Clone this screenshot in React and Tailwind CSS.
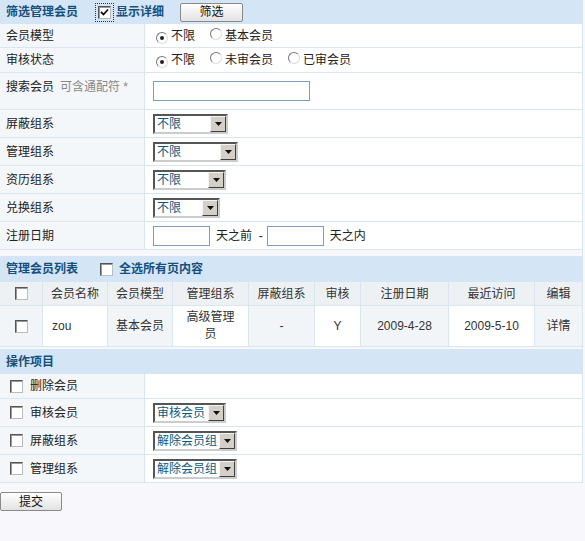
import React from "react";

const FONT = "font-['Liberation_Sans','Noto_Sans_CJK_SC',sans-serif]";

function Check({ checked = false, focus = false }) {
  const box = (
    <span className="relative inline-flex h-[13px] w-[13px] shrink-0 items-center justify-center border border-t-[#555] border-l-[#555] border-b-[#bbb] border-r-[#bbb] bg-white shadow-[inset_1px_1px_0_#999]">
      {checked && (
        <svg width="9" height="9" viewBox="0 0 9 9">
          <path d="M1 4 L3.5 6.5 L8 1.5" fill="none" stroke="#111" strokeWidth="1.8" />
        </svg>
      )}
    </span>
  );
  if (focus) {
    return (
      <span className="inline-flex items-center justify-center border border-dotted border-[#333] p-[2px]">{box}</span>
    );
  }
  return box;
}

function Radio({ checked = false }) {
  return (
    <span className="inline-flex h-[12px] w-[12px] shrink-0 items-center justify-center rounded-full border border-t-[#777] border-l-[#777] border-b-[#ddd] border-r-[#ddd] bg-white">
      {checked && <span className="h-[4px] w-[4px] rounded-full bg-[#222]" />}
    </span>
  );
}

function Sel({ w, text }) {
  return (
    <div className={`flex h-[20px] items-center border-2 border-t-[#555] border-l-[#555] border-b-[#ccc] border-r-[#ccc] bg-white ${w}`}>
      <span className="flex-1 overflow-hidden whitespace-nowrap pl-[2px] text-[12px] leading-[16px] text-[#0d5a7e]">{text}</span>
      <span className="flex h-[16px] w-[16px] items-center justify-center border border-t-[#f4f4f4] border-l-[#f4f4f4] border-b-[#404040] border-r-[#404040] bg-[#d4d0c8]">
        <svg width="7" height="4" viewBox="0 0 7 4">
          <path d="M0 0 H7 L3.5 4 Z" fill="#111" />
        </svg>
      </span>
    </div>
  );
}

function Input({ w }) {
  return <div className={`h-[20px] border border-[#7f9db9] bg-white ${w}`} />;
}

function Btn({ children, w }) {
  return (
    <div className={`flex h-[19px] items-center justify-center rounded-[2px] border border-[#8a8a8a] bg-gradient-to-b from-white to-[#e2e2e2] text-[12px] text-[#111] ${w}`}>
      {children}
    </div>
  );
}

function Row({ label, children, h, top = false }) {
  return (
    <div className={`grid grid-cols-[145px_1fr] border-b border-[#d9e6f0] ${h}`}>
      <div className={`flex border-r border-[#d9e6f0] bg-[#f4f7fa] pl-[6px] ${top ? "items-start pt-[5px]" : "items-center"}`}>
        {label}
      </div>
      <div className={`flex bg-white pl-[8px] ${top ? "items-start pt-[8px]" : "items-center"}`}>{children}</div>
    </div>
  );
}

function Header({ children, h = "h-[24px]" }) {
  return (
    <div className={`flex items-center bg-[#d4e5f6] pl-[6px] text-[12px] font-bold text-[#14507e] ${h}`}>
      {children}
    </div>
  );
}

const cols = "grid grid-cols-[43px_65px_65px_76px_66px_46px_88px_86px_1fr]";

export default function App() {
  return (
    <div className={`${FONT} min-h-[541px] w-[585px] bg-[#f8f8fc] text-[12px] text-[#222]`}>
      <div className="w-[583px] border-r border-[#d9e6f0]">
        {/* Section 1 */}
        <Header>
          <span className="w-[89px]">筛选管理会员</span>
          <Check checked focus />
          <span className="ml-[2px]">显示详细</span>
          <span className="ml-[16px]">
            <Btn w="w-[63px]">
              <span className="font-normal">筛选</span>
            </Btn>
          </span>
        </Header>
        <Row label="会员模型" h="h-[24px]">
          <span className="ml-[3px]">
            <Radio checked />
          </span>
          <span className="ml-[3px]">不限</span>
          <span className="ml-[15px]">
            <Radio />
          </span>
          <span className="ml-[3px]">基本会员</span>
        </Row>
        <Row label="审核状态" h="h-[25px]">
          <span className="ml-[3px]">
            <Radio checked />
          </span>
          <span className="ml-[3px]">不限</span>
          <span className="ml-[15px]">
            <Radio />
          </span>
          <span className="ml-[3px]">未审会员</span>
          <span className="ml-[15px]">
            <Radio />
          </span>
          <span className="ml-[3px]">已审会员</span>
        </Row>
        <Row
          top
          h="h-[37px]"
          label={
            <>
              <span>搜索会员</span>
              <span className="ml-[6px] text-[#888]">可含通配符 *</span>
            </>
          }
        >
          <Input w="w-[157px]" />
        </Row>
        <Row label="屏蔽组系" h="h-[28px]">
          <Sel w="w-[75px]" text="不限" />
        </Row>
        <Row label="管理组系" h="h-[28px]">
          <Sel w="w-[85px]" text="不限" />
        </Row>
        <Row label="资历组系" h="h-[28px]">
          <Sel w="w-[73px]" text="不限" />
        </Row>
        <Row label="兑换组系" h="h-[28px]">
          <Sel w="w-[67px]" text="不限" />
        </Row>
        <Row label="注册日期" h="h-[28px]">
          <Input w="w-[57px]" />
          <span className="ml-[6px]">天之前 &nbsp;-</span>
          <span className="ml-[4px]">
            <Input w="w-[57px]" />
          </span>
          <span className="ml-[6px]">天之内</span>
        </Row>

        {/* Section 2 */}
        <div className="mt-[6px]">
          <Header h="h-[26px]">
            <span className="w-[94px]">管理会员列表</span>
            <Check />
            <span className="ml-[6px]">全选所有页内容</span>
          </Header>
          <div className={`${cols} h-[24px] border-b border-[#d9e6f0] bg-[#eef1f4] text-[#333]`}>
            <div className="flex items-center justify-center border-r border-[#d9e6f0]">
              <Check />
            </div>
            {["会员名称", "会员模型", "管理组系", "屏蔽组系", "审核", "注册日期", "最近访问", "编辑"].map((t, i) => (
              <div
                key={t}
                className={`flex items-center justify-center ${i < 7 ? "border-r border-[#d9e6f0]" : ""}`}
              >
                {t}
              </div>
            ))}
          </div>
          <div className={`${cols} h-[41px] border-b border-[#d9e6f0] text-[#333]`}>
            <div className="flex items-center justify-center border-r border-[#d9e6f0] bg-[#f2f5f8]">
              <Check />
            </div>
            <div className="flex items-center border-r border-[#d9e6f0] bg-white pl-[9px]">zou</div>
            <div className="flex items-center justify-center border-r border-[#d9e6f0] bg-[#f2f5f8]">基本会员</div>
            <div className="flex items-center justify-center border-r border-[#d9e6f0] bg-white px-[9px] text-center leading-[17px]">
              高级管理员
            </div>
            <div className="flex items-center justify-center border-r border-[#d9e6f0] bg-[#f2f5f8]">-</div>
            <div className="flex items-center justify-center border-r border-[#d9e6f0] bg-white">Y</div>
            <div className="flex items-center justify-center border-r border-[#d9e6f0] bg-[#f2f5f8]">2009-4-28</div>
            <div className="flex items-center justify-center border-r border-[#d9e6f0] bg-white">2009-5-10</div>
            <div className="flex items-center justify-center bg-[#f2f5f8]">详情</div>
          </div>
        </div>

        {/* Section 3 */}
        <div className="mt-[2px]">
          <Header h="h-[25px]">操作项目</Header>
          {[
            ["删除会员", null, "h-[25px]"],
            ["审核会员", <Sel key="a" w="w-[73px]" text="审核会员" />, "h-[28px]"],
            ["屏蔽组系", <Sel key="b" w="w-[84px]" text="解除会员组" />, "h-[28px]"],
            ["管理组系", <Sel key="c" w="w-[84px]" text="解除会员组" />, "h-[28px]"],
          ].map(([label, ctl, h]) => (
            <div key={label} className={`grid grid-cols-[145px_1fr] border-b border-[#d9e6f0] ${h}`}>
              <div className="flex items-center border-r border-[#d9e6f0] bg-[#f4f7fa] pl-[10px]">
                <Check />
                <span className="ml-[7px]">{label}</span>
              </div>
              <div className="flex items-center bg-white pl-[8px]">{ctl}</div>
            </div>
          ))}
        </div>
      </div>
      <div className="mt-[9px]">
        <Btn w="w-[62px]">提交</Btn>
      </div>
    </div>
  );
}
